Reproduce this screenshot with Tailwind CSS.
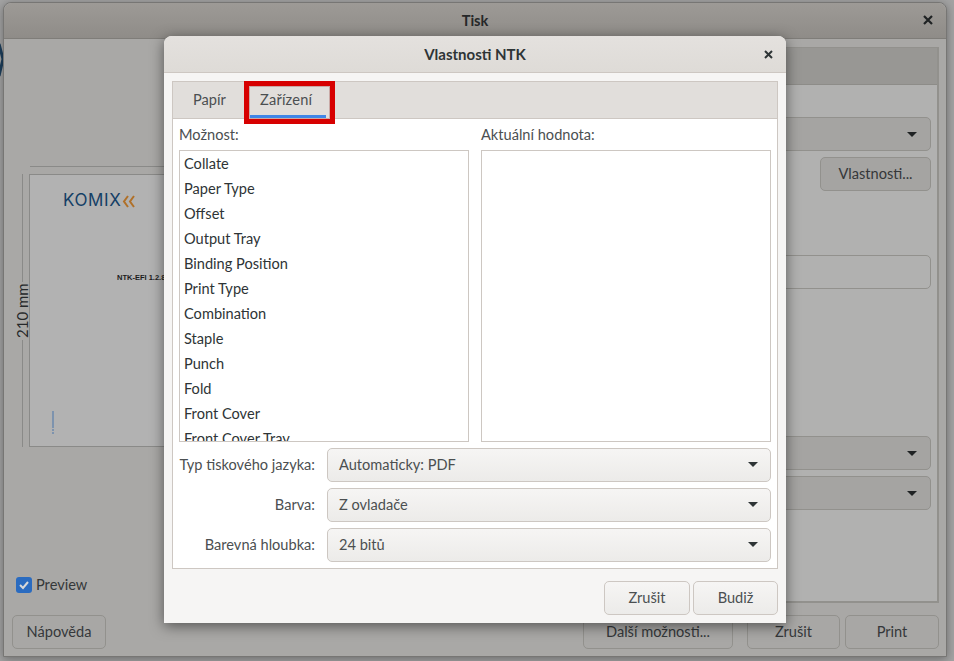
<!DOCTYPE html>
<html lang="cs">
<head>
    <meta charset="UTF-8">
    <title>Tisk</title>
    <script src="https://cdn.jsdelivr.net/npm/@tailwindcss/browser@4"></script>
</head>
<body class="relative w-[954px] h-[661px] overflow-hidden bg-[#a3a3a3] font-['Lato',sans-serif] text-[14.6px] text-[#2e3436]">

    <!-- okraj plochy za oknem -->
    <svg class="absolute left-0 top-[42px]" width="4" height="36" viewBox="0 0 4 36"><path d="M-1 2 L3 17 L-1 34" fill="none" stroke="#1d3f5c" stroke-width="3"/></svg>

    <!-- rodičovské okno Tisk -->
    <div class="absolute left-[3px] top-[2px] w-[944px] h-[655px] flex flex-col rounded-t-[8px] border border-[#777674] bg-[#a9a8a6] shadow-[0_2px_10px_rgba(0,0,0,0.35)] text-[#35383a]">
        <div class="relative h-[36px] shrink-0 flex items-center justify-center rounded-t-[8px] border-b border-[#7f7d79] bg-gradient-to-b from-[#9d9a96] to-[#8f8c88] font-bold text-[#262829]">
            Tisk
            <svg class="absolute right-[13px] top-[12px]" width="10" height="10" viewBox="0 0 10 10"><path d="M1 1 L9 9 M9 1 L1 9" stroke="#1f2223" stroke-width="2.2"/></svg>
        </div>

        <div class="flex h-[576px] shrink-0">
            <!-- náhled -->
            <div class="w-[556px] shrink-0 pl-[11px] flex flex-col">
                <div class="mt-[127px] ml-[15px] h-px bg-[#8a8a88]"></div>
                <div class="mt-[7px] flex h-[273px]">
                    <div class="w-[14px] flex flex-col items-center text-[#26282a]">
                        <div class="w-px flex-1 bg-[#8a8a88]"></div>
                        <div class="h-[58px] flex items-center justify-center [writing-mode:vertical-lr] rotate-180 text-[15px]">210 mm</div>
                        <div class="w-px flex-1 bg-[#8a8a88]"></div>
                    </div>
                    <div class="flex-1 border-l border-b border-t border-[#8a8a88] bg-[#b2b2b2] pl-[33px] pt-[15px]">
                        <div class="flex items-center h-[22px]">
                            <span class="font-['Inter',sans-serif] text-[17px] tracking-[0.6px] text-[#153f66]">KOMIX</span>
                            <svg class="ml-[1px]" width="14" height="13" viewBox="0 0 14 13"><path d="M6 1 L2 6.5 L6 12 M12 1 L8 6.5 L12 12" fill="none" stroke="#b07028" stroke-width="2"/></svg>
                        </div>
                        <div class="mt-[61px] ml-[54px] font-['Liberation_Sans',sans-serif] text-[7.5px] font-bold leading-[10px] text-[#1c1c1c]">NTK-EFI 1.2.8</div>
                        <div class="mt-[128px] ml-[-11px] flex flex-col gap-[1px] w-[2px]">
                            <div class="h-[17px] bg-[#7d93ae]"></div>
                            <div class="h-[2px] bg-[#7d93ae]"></div>
                            <div class="h-[2px] bg-[#7d93ae]"></div>
                        </div>
                    </div>
                </div>
                <div class="mt-[127px] ml-px flex items-center gap-[4px]">
                    <span class="w-[16px] h-[16px] rounded-[3px] bg-[#2a6bc0] flex items-center justify-center">
                        <svg width="12" height="12" viewBox="0 0 12 12"><path d="M2 6 L5 9 L10 3" fill="none" stroke="#d8d8d8" stroke-width="2"/></svg>
                    </span>
                    <span>Preview</span>
                </div>
            </div>

            <!-- záložky vpravo -->
            <div class="mt-[8px] ml-[1px] w-[378px] h-[556px] flex flex-col border-2 border-t border-[#92918d] bg-[#b1b1b0]">
                <div class="h-[37px] shrink-0 border-b border-[#8d8c88] bg-[#989794]"></div>
                <div class="flex flex-col items-end pr-[6px]">
                    <div class="mt-[32px] w-[300px] h-[34px] flex items-center justify-end pr-[13px] rounded-[5px] border border-[#92918d] bg-[#a5a4a2]">
                        <svg width="10" height="5" viewBox="0 0 10 5"><path d="M0 0 H10 L5 5 Z" fill="#1f2223"/></svg>
                    </div>
                    <div class="mt-[6px] w-[111px] h-[34px] pb-px flex items-center justify-center rounded-[5px] border border-[#92918d] bg-[#a5a4a2]">Vlastnosti...</div>
                    <div class="mt-[64px] w-[300px] h-[34px] rounded-[5px] border border-[#92918d] bg-[#b1b1b0]"></div>
                    <div class="mt-[147px] w-[300px] h-[34px] flex items-center justify-end pr-[13px] rounded-[5px] border border-[#92918d] bg-[#a5a4a2]">
                        <svg width="10" height="5" viewBox="0 0 10 5"><path d="M0 0 H10 L5 5 Z" fill="#1f2223"/></svg>
                    </div>
                    <div class="mt-[6px] w-[300px] h-[34px] flex items-center justify-end pr-[13px] rounded-[5px] border border-[#92918d] bg-[#a5a4a2]">
                        <svg width="10" height="5" viewBox="0 0 10 5"><path d="M0 0 H10 L5 5 Z" fill="#1f2223"/></svg>
                    </div>
                </div>
            </div>
        </div>

        <!-- spodní tlačítka -->
        <div class="flex items-start pl-[8px] pr-[7px]">
            <div class="w-[94px] h-[34px] pb-px flex items-center justify-center rounded-[5px] border border-[#92918d] bg-[#a8a7a5]">Nápověda</div>
            <div class="ml-auto w-[150px] h-[34px] pb-px flex items-center justify-center rounded-[5px] border border-[#92918d] bg-[#a8a7a5]">Další možnosti...</div>
            <div class="ml-[14px] w-[93px] h-[34px] pb-px flex items-center justify-center rounded-[5px] border border-[#92918d] bg-[#a8a7a5]">Zrušit</div>
            <div class="ml-[5px] w-[94px] h-[34px] pb-px flex items-center justify-center rounded-[5px] border border-[#92918d] bg-[#a8a7a5]">Print</div>
        </div>
    </div>

    <!-- dialog Vlastnosti NTK -->
    <div class="absolute left-[164px] top-[36px] w-[622px] h-[587px] flex flex-col rounded-t-[8px] bg-[#f6f5f4] shadow-[0_3px_14px_rgba(0,0,0,0.5)]">
        <div class="relative h-[37px] shrink-0 flex items-center justify-center rounded-t-[8px] border-b border-[#cdc7c2] bg-gradient-to-b from-[#e4e1de] to-[#dedbd7] font-bold text-[15px]">
            Vlastnosti NTK
            <svg class="absolute right-[13px] top-[14px]" width="9" height="9" viewBox="0 0 9 9"><path d="M1 1 L8 8 M8 1 L1 8" stroke="#2e3436" stroke-width="2"/></svg>
        </div>

        <div class="mx-[8px] mt-[8px] h-[488px] flex flex-col border border-[#cdc7c2] bg-white">
            <div class="relative h-[37px] shrink-0 flex items-stretch border-b border-[#cdc7c2] bg-[#e1dedb] text-[#4b4f51]">
                <div class="ml-[20px] w-[57px] flex items-center">Papír</div>
                <div class="w-[76px] pt-[3px] pl-[10px] flex items-center tracking-[0.2px] border-b-[3px] border-[#3f86e8]">Zařízení</div>
                <div class="absolute left-[71px] -top-px w-[91px] h-[43px] border-[5px] border-[#d70000] shadow-[inset_0_0_0_1px_#c9a9a6]"></div>
            </div>

            <div class="flex-1 flex flex-col px-[6px]">
                <div class="grid grid-cols-[290px_290px] gap-x-[12px]">
                    <div class="h-[31px] flex items-center text-[#4b4f51]">Možnost:</div>
                    <div class="h-[31px] flex items-center text-[#4b4f51]">Aktuální hodnota:</div>
                    <div class="h-[292px] overflow-hidden border border-[#cdc7c2] pl-[4px]">
                        <div class="h-[25px] flex items-center">Collate</div>
                        <div class="h-[25px] flex items-center">Paper Type</div>
                        <div class="h-[25px] flex items-center">Offset</div>
                        <div class="h-[25px] flex items-center">Output Tray</div>
                        <div class="h-[25px] flex items-center">Binding Position</div>
                        <div class="h-[25px] flex items-center">Print Type</div>
                        <div class="h-[25px] flex items-center">Combination</div>
                        <div class="h-[25px] flex items-center">Staple</div>
                        <div class="h-[25px] flex items-center">Punch</div>
                        <div class="h-[25px] flex items-center">Fold</div>
                        <div class="h-[25px] flex items-center">Front Cover</div>
                        <div class="h-[25px] flex items-center">Front Cover Tray</div>
                    </div>
                    <div class="h-[292px] border border-[#cdc7c2]"></div>
                </div>

                <div class="mt-[6px] grid grid-cols-[136px_444px] gap-x-[12px] gap-y-[6px] items-center text-[#4b4f51]">
                    <div class="text-right whitespace-nowrap pb-px">Typ tiskového jazyka:</div>
                    <div class="h-[34px] pb-px flex items-center justify-between px-[11px] pr-[12px] rounded-[5px] border border-[#cdc7c2] bg-gradient-to-b from-[#f6f5f4] to-[#ecebe9]">
                        Automaticky: PDF
                        <svg width="10" height="5" viewBox="0 0 10 5"><path d="M0 0 H10 L5 5 Z" fill="#2e3436"/></svg>
                    </div>
                    <div class="text-right pb-px">Barva:</div>
                    <div class="h-[34px] pb-px flex items-center justify-between px-[11px] pr-[12px] rounded-[5px] border border-[#cdc7c2] bg-gradient-to-b from-[#f6f5f4] to-[#ecebe9]">
                        Z ovladače
                        <svg width="10" height="5" viewBox="0 0 10 5"><path d="M0 0 H10 L5 5 Z" fill="#2e3436"/></svg>
                    </div>
                    <div class="text-right whitespace-nowrap pb-px">Barevná hloubka:</div>
                    <div class="h-[34px] pb-px flex items-center justify-between px-[11px] pr-[12px] rounded-[5px] border border-[#cdc7c2] bg-gradient-to-b from-[#f6f5f4] to-[#ecebe9]">
                        24 bitů
                        <svg width="10" height="5" viewBox="0 0 10 5"><path d="M0 0 H10 L5 5 Z" fill="#2e3436"/></svg>
                    </div>
                </div>
            </div>
        </div>

        <div class="mt-[12px] mr-[8px] flex justify-end gap-[3px] text-[#4b4f51]">
            <div class="w-[86px] h-[34px] pb-px flex items-center justify-center rounded-[5px] border border-[#cdc7c2] bg-gradient-to-b from-[#f6f5f4] to-[#ecebe9]">Zrušit</div>
            <div class="w-[85px] h-[34px] pb-px flex items-center justify-center rounded-[5px] border border-[#cdc7c2] bg-gradient-to-b from-[#f6f5f4] to-[#ecebe9]">Budiž</div>
        </div>
    </div>
</body>
</html>
